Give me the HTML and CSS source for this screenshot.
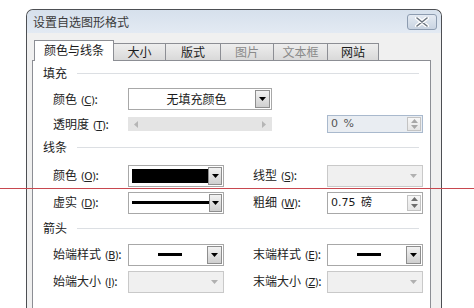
FILE: index.html
```html
<!DOCTYPE html>
<html>
<head>
<meta charset="utf-8">
<link rel="stylesheet" href="styles.css">
</head>
<body>
<div class="dialog">
  <div class="titlebar">
    <span class="title">设置自选图形格式</span>
    <span class="close"><svg width="14" height="10" viewBox="0 0 14 10"><path d="M2 1 L12 9 M12 1 L2 9" stroke="#fff" stroke-width="4" stroke-linecap="round"/><path d="M2 1 L12 9 M12 1 L2 9" stroke="#6b7480" stroke-width="1.6" stroke-linecap="round"/></svg></span>
  </div>
  <div class="client">
    <div class="tabs">
      <div class="tab active">颜色与线条</div>
      <div class="tab w52">大小</div>
      <div class="tab w55">版式</div>
      <div class="tab w53 dis">图片</div>
      <div class="tab w54 dis">文本框</div>
      <div class="tab w51">网站</div>
    </div>
    <div class="panel">
      <div class="sec first"><span>填充</span><i></i></div>
      <div class="row r1">
        <span class="lbl">颜色 <span class="k">(<u>C</u>)</span>:</span>
        <div class="dd wide"><span class="val">无填充颜色</span><span class="btn"><svg width="7" height="4" viewBox="0 0 7 4"><path d="M0 0H7L3.5 4Z" fill="#000"/></svg></span></div>
      </div>
      <div class="row r2">
        <span class="lbl">透明度 <span class="k">(<u>T</u>)</span>:</span>
        <div class="slider"><svg width="4" height="7" viewBox="0 0 4 7"><path d="M4 0V7L0 3.5Z" fill="#b5b5b5"/></svg><svg width="4" height="7" viewBox="0 0 4 7"><path d="M0 0V7L4 3.5Z" fill="#b5b5b5"/></svg></div>
        <div class="spin dis gapw"><span class="sval">0 %</span><span class="sb"><svg width="7" height="4" viewBox="0 0 7 4"><path d="M0 4H7L3.5 0Z" fill="#a8a8a8"/></svg><svg width="7" height="4" viewBox="0 0 7 4"><path d="M0 0H7L3.5 4Z" fill="#a8a8a8"/></svg></span></div>
      </div>
      <div class="sec s2"><span>线条</span><i></i></div>
      <div class="row r3">
        <span class="lbl">颜色 <span class="k">(<u>O</u>)</span>:</span>
        <div class="dd"><span class="swatch"></span><span class="btn"><svg width="7" height="4" viewBox="0 0 7 4"><path d="M0 0H7L3.5 4Z" fill="#000"/></svg></span></div>
        <span class="lbl lbl2">线型 <span class="k">(<u>S</u>)</span>:</span>
        <div class="dd dis"><span class="btn"><svg width="7" height="4" viewBox="0 0 7 4"><path d="M0 0H7L3.5 4Z" fill="#b0b0b0"/></svg></span></div>
      </div>
      <div class="row">
        <span class="lbl">虚实 <span class="k">(<u>D</u>)</span>:</span>
        <div class="dd"><span class="line full"></span><span class="btn"><svg width="7" height="4" viewBox="0 0 7 4"><path d="M0 0H7L3.5 4Z" fill="#000"/></svg></span></div>
        <span class="lbl lbl2">粗细 <span class="k">(<u>W</u>)</span>:</span>
        <div class="spin"><span class="sval dark">0.75 磅</span><span class="sb"><svg width="7" height="4" viewBox="0 0 7 4"><path d="M0 4H7L3.5 0Z" fill="#6e6e6e"/></svg><svg width="7" height="4" viewBox="0 0 7 4"><path d="M0 0H7L3.5 4Z" fill="#6e6e6e"/></svg></span></div>
      </div>
      <div class="sec s3"><span>箭头</span><i></i></div>
      <div class="row r5">
        <span class="lbl">始端样式 <span class="k">(<u>B</u>)</span>:</span>
        <div class="dd"><span class="line short"></span><span class="btn"><svg width="7" height="4" viewBox="0 0 7 4"><path d="M0 0H7L3.5 4Z" fill="#000"/></svg></span></div>
        <span class="lbl lbl2">末端样式 <span class="k">(<u>E</u>)</span>:</span>
        <div class="dd"><span class="line short"></span><span class="btn"><svg width="7" height="4" viewBox="0 0 7 4"><path d="M0 0H7L3.5 4Z" fill="#000"/></svg></span></div>
      </div>
      <div class="row">
        <span class="lbl">始端大小 <span class="k">(<u>I</u>)</span>:</span>
        <div class="dd dis"><span class="btn"><svg width="7" height="4" viewBox="0 0 7 4"><path d="M0 0H7L3.5 4Z" fill="#b0b0b0"/></svg></span></div>
        <span class="lbl lbl2">末端大小 <span class="k">(<u>Z</u>)</span>:</span>
        <div class="dd dis"><span class="btn"><svg width="7" height="4" viewBox="0 0 7 4"><path d="M0 0H7L3.5 4Z" fill="#b0b0b0"/></svg></span></div>
      </div>
    </div>
  </div>
</div>
<div class="redline"></div>
</body>
</html>
```
FILE: styles.css
```css
html, body {
  margin: 0;
  padding: 0;
  background: #fff;
  overflow: hidden;
}
body {
  width: 474px;
  height: 308px;
  position: relative;
  font-family: "Noto Sans CJK SC", "Noto Sans", sans-serif;
  font-size: 12px;
  color: #1b1b1b;
}
.dialog {
  margin: 9px 0 0 26px;
  width: 416px;
  height: 299px;
  box-sizing: border-box;
  border: 1px solid #4d4f53;
  border-bottom: none;
  border-radius: 7px 7px 0 0;
  background: #e6ecf3;
  display: flex;
  flex-direction: column;
  overflow: hidden;
}
.titlebar {
  height: 23px;
  flex: none;
  display: flex;
  align-items: center;
  justify-content: space-between;
  padding: 0 4px 0 6px;
  background: linear-gradient(#d6e0ec, #e3eaf3);
  border-radius: 6px 6px 0 0;
}
.title {
  font-size: 12px;
  color: #3a3a3a;
  line-height: 14px;
}
.close {
  width: 30px;
  height: 16px;
  box-sizing: border-box;
  border: 1px solid #8d9cb0;
  border-radius: 3px;
  background: linear-gradient(#e4eaf2, #c9d4e2);
  display: flex;
  align-items: center;
  justify-content: center;
  margin-top: 1px;
}
.client {
  flex: 1;
  padding: 0 9px 0 5px;
  background: #f0f0f0;
  display: flex;
  flex-direction: column;
  min-height: 0;
}
.tabs {
  height: 27px;
  flex: none;
  display: flex;
  align-items: flex-end;
  padding-left: 2px;
  position: relative;
  z-index: 2;
}
.tab {
  box-sizing: border-box;
  height: 17px;
  border: 1px solid #8c8e94;
  border-bottom: none;
  border-left: none;
  background: linear-gradient(#eeeeee, #d9d9d9);
  display: flex;
  align-items: center;
  justify-content: center;
  font-size: 12px;
  font-weight: 400;
  line-height: 14px;
  color: #1b1b1b;
}
.tab.active {
  width: 80px;
  height: 21px;
  margin-bottom: -1px;
  border-left: 1px solid #8c8e94;
  background: #fff;
  padding-bottom: 2px;
}
.w52 { width: 52px; }
.w55 { width: 55px; }
.w53 { width: 53px; }
.w54 { width: 54px; }
.w51 { width: 51px; }
.tab.dis { color: #8a8a8a; }
.panel {
  width: 399px;
  flex: 1;
  box-sizing: border-box;
  border: 1px solid #8c8e94;
  border-bottom: none;
  background: #fff;
  display: flex;
  flex-direction: column;
  min-height: 0;
}
.sec {
  height: 14px;
  flex: none;
  display: flex;
  align-items: center;
  padding-left: 10px;
  padding-right: 11px;
  line-height: 14px;
}
.sec i {
  flex: 1;
  height: 1px;
  background: #dcdfe3;
  margin-left: 10px;
}
.sec.first { margin-top: 5px; }
.sec.s2 { margin-top: 4px; }
.sec.s3 { margin-top: 5px; }
.row {
  height: 27px;
  flex: none;
  display: flex;
  align-items: center;
  padding-left: 20px;
}
.row.r1 { margin-top: 6px; height: 26px; }
.row.r2 { height: 24px; }
.row.r3 { margin-top: 8px; }
.row.r5 { margin-top: 6px; }
.lbl {
  width: 75px;
  flex: none;
  white-space: nowrap;
  line-height: 14px;
  color: #222;
}
.lbl2 {
  width: 74px;
  margin-left: 29px;
}
.k {
  font-family: "DejaVu Sans", sans-serif;
  font-size: 10.5px;
  letter-spacing: -0.6px;
  margin-left: 1px;
}
.dd {
  width: 96px;
  height: 22px;
  box-sizing: border-box;
  border: 1px solid #a8a8a8;
  background: #fff;
  display: flex;
  align-items: center;
  padding: 0 1px 0 3px;
  flex: none;
}
.dd.wide { width: 144px; }
.dd .val {
  flex: 1;
  text-align: center;
  line-height: 14px;
  font-size: 12px;
  padding-left: 6px;
}
.dd .btn {
  margin-left: auto;
  width: 15px;
  height: 18px;
  box-sizing: border-box;
  border: 1px solid #8e8e8e;
  background: linear-gradient(#f2f2f2, #cfcfcf);
  display: flex;
  align-items: center;
  justify-content: center;
}
.dd.dis {
  background: #f0f0f0;
  border-color: #c9c9c9;
}
.dd.dis .btn {
  border: none;
  background: transparent;
}
.swatch {
  width: 76px;
  height: 14px;
  background: #000;
  flex: none;
}
.line {
  height: 3px;
  background: #000;
  flex: none;
}
.line.full { width: 77px; }
.line.short { width: 24px; margin-left: 26px; }
.slider {
  width: 144px;
  height: 14px;
  background: #e4e4e4;
  display: flex;
  align-items: center;
  justify-content: space-between;
  padding: 0 6px;
  box-sizing: border-box;
  flex: none;
}
.gapw { margin-left: 55px; }
.spin {
  width: 96px;
  height: 22px;
  box-sizing: border-box;
  border: 1px solid #a8a8a8;
  background: #fff;
  display: flex;
  align-items: center;
  padding: 0 1px 0 3px;
  flex: none;
}
.spin.dis {
  height: 18px;
  background: #e9edf2;
  border-color: #a9b9cd;
}
.sval {
  flex: 1;
  font-family: "DejaVu Sans", "Noto Sans CJK SC", sans-serif;
  font-size: 11px;
  color: #555;
  line-height: 14px;
  word-spacing: 2px;
}
.sval.dark { color: #1b1b1b; }
.sb {
  width: 14px;
  height: 16px;
  box-sizing: border-box;
  border: 1px solid #c3c3c3;
  background: linear-gradient(#f7f7f7, #e6e6e6);
  display: flex;
  flex-direction: column;
  align-items: center;
  justify-content: space-around;
}
.spin.dis .sb { height: 14px; }
.redline {
  position: absolute;
  left: 0;
  top: 188px;
  width: 474px;
  height: 1px;
  background: #c8474f;
  z-index: 5;
}
```
